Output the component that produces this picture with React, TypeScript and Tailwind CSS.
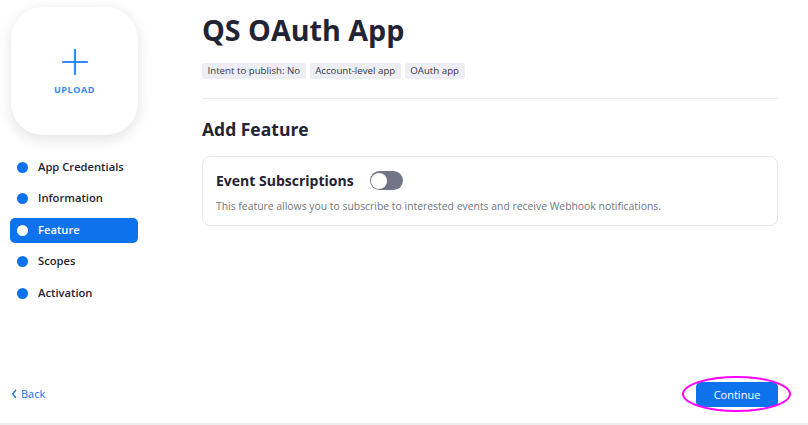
import React from 'react';

const steps = ['App Credentials', 'Information', 'Feature', 'Scopes', 'Activation'];
const tags = ['Intent to publish: No', 'Account-level app', 'OAuth app'];

const App = () => {
  return (
    <div className="flex h-[425px] w-[808px] flex-col bg-white font-['Open_Sans',sans-serif] text-[#232333]">
      <div className="flex flex-1">
        <aside className="flex w-[148px] flex-col pl-[10px] pt-[7px]">
          <div className="ml-[1px] flex h-[128px] w-[127px] flex-col items-center rounded-[32px] bg-white pt-[42px] shadow-[0_4px_14px_rgba(0,0,0,0.12)]">
            <svg width="26" height="26" viewBox="0 0 26 26">
              <path d="M13 1v24M1 13h24" stroke="#2d8cff" strokeWidth="2.2" strokeLinecap="round" />
            </svg>
            <span className="mt-[9px] text-[9px] font-bold leading-[12px] tracking-[0.6px] text-[#2d8cff]">UPLOAD</span>
          </div>

          <ul className="mt-[19.5px] flex flex-col gap-[6.5px]">
            {steps.map((s) => {
              const active = s === 'Feature';
              return (
                <li
                  key={s}
                  className={
                    active
                      ? 'flex h-[25px] w-[128px] items-center gap-[10px] rounded-[5px] bg-[#0e72ed] pl-[7px] text-[11.2px] font-semibold text-white'
                      : 'flex h-[25px] w-[128px] items-center gap-[10px] pl-[7px] text-[11.2px] font-semibold text-[#232333]'
                  }
                >
                  <span className={active ? 'h-[11px] w-[11px] rounded-full bg-white' : 'h-[11px] w-[11px] rounded-full bg-[#0e72ed]'} />
                  {s}
                </li>
              );
            })}
          </ul>
        </aside>

        <main className="flex-1 pl-[54px] pr-[30px]">
          <h1 className="mt-[10px] text-[28.7px] font-bold leading-[40px]">QS OAuth App</h1>
          <div className="mt-[13px] flex gap-[4px]">
            {tags.map((t) => (
              <span key={t} className="flex h-[16px] items-center rounded-[3px] bg-[#ededf4] px-[5.5px] text-[9.7px] text-[#39394d]">
                {t}
              </span>
            ))}
          </div>
          <div className="mt-[19px] h-px bg-[#ededf4]" />

          <h2 className="mt-[17px] text-[17.5px] font-bold leading-[26px]">Add Feature</h2>

          <div className="mt-[14px] rounded-[8px] border border-[#e8e8ec] px-[13px] pb-[10px] pt-[13px]">
            <div className="flex items-center gap-[16px]">
              <span className="text-[14px] font-bold">Event Subscriptions</span>
              <span className="flex h-[19px] w-[33px] items-center rounded-full bg-[#747487] pl-[1.5px]">
                <span className="h-[16px] w-[16px] rounded-full bg-white" />
              </span>
            </div>
            <p className="mt-[8px] text-[10.4px] text-[#6e7680]">
              This feature allows you to subscribe to interested events and receive Webhook notifications.
            </p>
          </div>
        </main>
      </div>

      <footer className="flex h-[64px] items-center justify-between border-b-2 border-[#ededed] pl-[11px] pr-[30px] pt-[4px]">
        <button className="flex items-center gap-[4px] text-[11px] text-[#0e72ed]">
          <svg width="6" height="10" viewBox="0 0 6 10">
            <path d="M5 1L1.5 5 5 9" fill="none" stroke="#0e72ed" strokeWidth="1.2" />
          </svg>
          Back
        </button>
        <div className="relative">
          <button className="h-[25px] w-[82px] rounded-[5px] bg-[#0e72ed] text-[11px] text-white">Continue</button>
          <span className="pointer-events-none absolute left-[-14px] top-[-5px] h-[36px] w-[109px] rounded-[50%] border-2 border-[#ff00ff]" />
        </div>
      </footer>
    </div>
  );
};

export default App;
